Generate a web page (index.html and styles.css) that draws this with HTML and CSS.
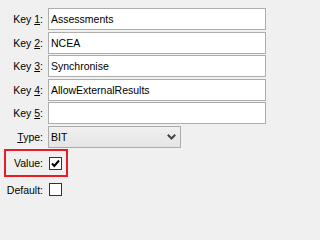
FILE: index.html
```html
<!DOCTYPE html>
<html>
<head>
<meta charset="utf-8">
<link rel="stylesheet" href="styles.css">
</head>
<body>
<div class="form">
  <div class="row"><label class="lbl">Key <u>1</u>:</label><div class="text">Assessments</div></div>
  <div class="row"><label class="lbl">Key <u>2</u>:</label><div class="text">NCEA</div></div>
  <div class="row"><label class="lbl">Key <u>3</u>:</label><div class="text">Synchronise</div></div>
  <div class="row"><label class="lbl">Key <u>4</u>:</label><div class="text">AllowExternalResults</div></div>
  <div class="row"><label class="lbl">Key <u>5</u>:</label><div class="text"></div></div>
  <div class="row"><label class="lbl"><u>T</u>ype:</label><div class="select"><span>BIT</span><svg class="chev" width="9" height="6" viewBox="0 0 9 6"><path d="M0.8 0.8 L4.5 4.5 L8.2 0.8" fill="none" stroke="#444" stroke-width="2"/></svg></div></div>
  <div class="row highlight"><label class="lbl">Value:</label><span class="check"><svg width="11" height="11" viewBox="0 0 11 11"><path d="M2 5.5 L4.3 8 L9 2.5" fill="none" stroke="#000" stroke-width="2"/></svg></span></div>
  <div class="row"><label class="lbl">Default:</label><span class="check"></span></div>
</div>
</body>
</html>
```
FILE: styles.css
```css
html, body {
  margin: 0;
  padding: 0;
  background: #f0f0f0;
}
body {
  font-family: "Liberation Sans", Arial, sans-serif;
  font-size: 10.5px;
  color: #000;
  width: 270px;
  height: 201px;
  overflow: hidden;
}
.form {
  display: flex;
  flex-direction: column;
  gap: 1.5px;
  padding: 8px 4px 0 5px;
}
.row {
  display: flex;
  align-items: center;
  height: 22px;
  gap: 5px;
}
.lbl {
  width: 38px;
  flex: none;
  text-align: right;
  white-space: nowrap;
}
.lbl u {
  text-decoration-thickness: 1px;
  text-underline-offset: 1px;
}
.text {
  flex: 1;
  height: 22px;
  box-sizing: border-box;
  border: 1px solid #adadad;
  background: #fff;
  padding: 0 2px;
  display: flex;
  align-items: center;
  white-space: nowrap;
}
.select {
  width: 133px;
  height: 22px;
  box-sizing: border-box;
  border: 1px solid #acacac;
  background: linear-gradient(#f0f0f0, #e5e5e5);
  padding: 0 4px 0 2px;
  display: flex;
  align-items: center;
  justify-content: space-between;
}
.chev {
  margin-right: 0;
  display: block;
}
.highlight {
  height: 28px;
  width: 64px;
  box-sizing: border-box;
  border: 2px solid #e81c24;
  margin-left: -1px;
}
.highlight .lbl {
  width: 37px;
}
.check {
  width: 13px;
  height: 13px;
  box-sizing: border-box;
  border: 1px solid #333;
  background: #fff;
  margin-left: 1px;
  display: flex;
  align-items: center;
  justify-content: center;
}
.check svg {
  display: block;
}
```
